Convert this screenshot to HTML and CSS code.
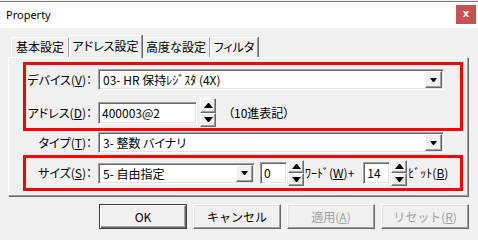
FILE: index.html
```html
<!DOCTYPE html>
<html lang="ja">
<head>
    <meta charset="UTF-8">
    <title>Property</title>
    <link rel="stylesheet" href="styles.css">
</head>
<body>
    <div class="window">
        <div class="titlebar">
            <span class="title">Property</span>
            <span class="close">x</span>
        </div>

        <div class="tabs">
            <div class="tab t1">基本設定</div>
            <div class="tab active t2">アドレス設定</div>
            <div class="tab t3">高度な設定</div>
            <div class="tab t4">フィルタ</div>
        </div>

        <div class="panel">
            <div class="mark mark-addr">
                <div class="row r-device">
                    <label class="lbl">デバイス(<u>V</u>)：</label>
                    <div class="combo wide"><span class="val">03- HR 保持ﾚｼﾞｽﾀ (4X)</span><span class="drop"></span></div>
                </div>
                <div class="row r-addr">
                    <label class="lbl">アドレス(<u>D</u>)：</label>
                    <div class="field addr">400003@2</div>
                    <div class="spin tall"><span class="up"></span><span class="down"></span></div>
                    <span class="note">（10進表記）</span>
                </div>
            </div>

            <div class="row r-type">
                <label class="lbl">タイプ(<u>T</u>)：</label>
                <div class="combo wide"><span class="val">3- 整数 バイナリ</span><span class="drop"></span></div>
            </div>

            <div class="mark mark-size">
                <div class="row r-size">
                    <label class="lbl">サイズ(<u>S</u>)：</label>
                    <div class="combo narrow"><span class="val">5- 自由指定</span><span class="drop"></span></div>
                    <div class="field num word">0</div>
                    <div class="spin"><span class="up"></span><span class="down"></span></div>
                    <span class="unit">ﾜｰﾄﾞ(<u>W</u>)+</span>
                    <div class="field num bit">14</div>
                    <div class="spin"><span class="up"></span><span class="down"></span></div>
                    <span class="unit">ﾋﾞｯﾄ(<u>B</u>)</span>
                </div>
            </div>
        </div>

        <div class="buttons">
            <button class="btn default">OK</button>
            <button class="btn">キャンセル</button>
            <button class="btn" disabled>適用(<u>A</u>)</button>
            <button class="btn" disabled>リセット(<u>R</u>)</button>
        </div>
    </div>
</body>
</html>
```

FILE: styles.css
```css
body {
    margin: 0;
    width: 478px;
    height: 240px;
    overflow: hidden;
    background-color: #f0f0f0;
    font-family: "Noto Sans CJK JP", sans-serif;
    font-size: 12px;
    font-feature-settings: "palt";
    color: #000;
}
.window {
    margin-top: 1px;
    border-top: 1px solid #7a7a7a;
}
.titlebar {
    height: 26px;
    background-color: #fff;
    display: flex;
    justify-content: space-between;
    align-items: flex-start;
}
.title {
    font-family: "Noto Sans", sans-serif;
    font-size: 11px;
    line-height: 16px;
    padding: 5px 0 0 6px;
}
.close {
    width: 20px;
    height: 19px;
    margin: 3px 2px 0 0;
    background-color: #c75050;
    color: #fff;
    font-family: "DejaVu Sans", sans-serif;
    font-size: 10px;
    font-weight: bold;
    line-height: 18px;
    text-align: center;
}

/* tabs */
.tabs {
    display: flex;
    align-items: flex-end;
    height: 22px;
    margin-top: 7px;
    padding-left: 11px;
}
.tab {
    box-sizing: border-box;
    height: 20px;
    line-height: 18px;
    text-align: center;
    border: 1px solid;
    border-color: #fff #a0a0a0 transparent #fff;
    border-bottom: none;
    box-shadow: 1px 0 0 #696969;
}
.tab.active {
    position: relative;
    z-index: 1;
    height: 23px;
    margin-bottom: -1px;
    line-height: 19px;
    background-color: #f0f0f0;
}
.t1 { width: 58px; }
.t2 { width: 73px; }
.t3 { width: 68px; }
.t4 { width: 48px; }

.panel {
    box-sizing: border-box;
    width: 460px;
    height: 139px;
    margin-left: 8px;
    border: 1px solid;
    border-color: #fff #a0a0a0 #a0a0a0 #fff;
    box-shadow: 1px 1px 0 #696969;
}

/* red marks */
.mark {
    border: 3px solid #f00;
    margin: 0 4px 0 14px;
}
.mark-addr {
    margin-top: 4px;
    padding: 4px 0 1px;
}
.mark-size {
    margin-top: 2px;
    padding: 2px 0;
}

.row {
    display: flex;
    align-items: center;
}
.r-device { height: 21px; }
.r-addr { height: 29px; margin-top: 8px; }
.r-type { height: 21px; margin: 1px 0 0 17px; }
.r-size { height: 26px; }

.lbl {
    box-sizing: border-box;
    width: 72px;
    padding-right: 6px;
    text-align: right;
    white-space: nowrap;
    line-height: 16px;
}

/* sunken fields */
.combo, .field {
    box-sizing: border-box;
    background-color: #fff;
    border: 1px solid;
    border-color: #a0a0a0 #fff #fff #a0a0a0;
    box-shadow: inset 1px 1px 0 #696969, inset -1px -1px 0 #e3e3e3;
    white-space: nowrap;
}
.combo {
    display: flex;
    align-items: stretch;
    height: 21px;
    padding: 2px 1px 1px 4px;
}
.combo.wide { width: 346px; }
.combo.narrow { width: 157px; }
.val {
    flex: 1;
    line-height: 16px;
}
.drop {
    width: 17px;
    margin: -1px 0 0;
    box-sizing: border-box;
    border: 1px solid;
    border-color: #fff #696969 #696969 #fff;
    box-shadow: inset -1px -1px 0 #a0a0a0;
    background-color: #f0f0f0;
    display: flex;
    align-items: center;
    justify-content: center;
}
.drop::after {
    content: "";
    width: 1px;
    border-left: 3px solid transparent;
    border-right: 3px solid transparent;
    border-top: 4px solid #000;
}

.field {
    height: 22px;
    padding: 0 3px;
    line-height: 20px;
}
.addr { width: 99px; }
.word { width: 27px; margin-left: 5px; }
.bit { width: 27px; margin-left: 9px; }

/* spinner */
.spin {
    display: flex;
    flex-direction: column;
    width: 16px;
    height: 26px;
    margin-left: 1px;
}
.spin.tall {
    height: 29px;
    margin-left: 3px;
}
.spin span {
    flex: 1;
    box-sizing: border-box;
    border: 1px solid;
    border-color: #fff #696969 #696969 #fff;
    box-shadow: inset -1px -1px 0 #a0a0a0;
    background-color: #f0f0f0;
    display: flex;
    align-items: center;
    justify-content: center;
}
.spin .up::after {
    content: "";
    width: 1px;
    border-left: 4px solid transparent;
    border-right: 4px solid transparent;
    border-bottom: 5px solid #000;
}
.spin .down::after {
    content: "";
    width: 1px;
    border-left: 4px solid transparent;
    border-right: 4px solid transparent;
    border-top: 5px solid #000;
}

.note {
    margin-left: 12px;
    line-height: 16px;
}
.unit {
    margin-left: 1px;
    line-height: 16px;
    white-space: nowrap;
}

/* buttons */
.buttons {
    display: flex;
    gap: 6px;
    margin: 8px 0 0 99px;
}
.btn {
    box-sizing: border-box;
    width: 88px;
    height: 25px;
    padding: 0;
    font-family: inherit;
    font-size: 12px;
    color: #000;
    background-color: #f0f0f0;
    border: 1px solid;
    border-color: #fff #696969 #696969 #fff;
    box-shadow: inset -1px -1px 0 #a0a0a0, inset 1px 1px 0 #e3e3e3;
}
.btn.default {
    border-color: #404040;
    box-shadow: inset 1px 1px 0 #fff, inset -1px -1px 0 #696969, inset -2px -2px 0 #a0a0a0;
}
.btn:disabled {
    color: #a0a0a0;
}
```
